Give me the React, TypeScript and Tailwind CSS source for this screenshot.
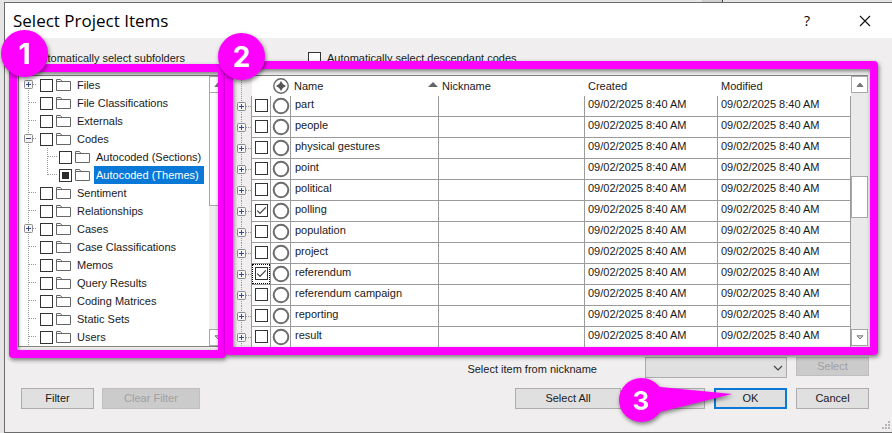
import React from "react";

type TreeNode = {
  label: string;
  expander?: "plus" | "minus";
  child?: boolean;
  last?: boolean;
  partial?: boolean;
};

const TREE: TreeNode[] = [
  { label: "Files", expander: "plus" },
  { label: "File Classifications" },
  { label: "Externals" },
  { label: "Codes", expander: "minus" },
  { label: "Autocoded (Sections)", child: true },
  { label: "Autocoded (Themes)", child: true, last: true, partial: true },
  { label: "Sentiment" },
  { label: "Relationships" },
  { label: "Cases", expander: "plus" },
  { label: "Case Classifications" },
  { label: "Memos" },
  { label: "Query Results" },
  { label: "Coding Matrices" },
  { label: "Static Sets" },
  { label: "Users" },
];

const CODES: { name: string; checked?: boolean; focused?: boolean }[] = [
  { name: "part" },
  { name: "people" },
  { name: "physical gestures" },
  { name: "point" },
  { name: "political" },
  { name: "polling", checked: true },
  { name: "population" },
  { name: "project" },
  { name: "referendum", checked: true, focused: true },
  { name: "referendum campaign" },
  { name: "reporting" },
  { name: "result" },
];

const STAMP = "09/02/2025 8:40 AM";

function Tick({ label, checked, partial }: { label?: string; checked?: boolean; partial?: boolean }) {
  return (
    <span className="grid size-[13px] shrink-0">
      <input
        type="checkbox"
        aria-label={label}
        defaultChecked={checked}
        className="peer col-start-1 row-start-1 size-[13px] appearance-none border border-[#333] bg-white"
      />
      {partial && <span className="pointer-events-none col-start-1 row-start-1 m-[3px] bg-[#2b2b2b]" />}
      <svg
        viewBox="0 0 13 13"
        className="pointer-events-none invisible col-start-1 row-start-1 size-[13px] peer-checked:visible"
      >
        <path d="M2.3 6.6 5 9.4 10.8 3.4" fill="none" stroke="#444" strokeWidth="1.3" />
      </svg>
    </span>
  );
}

function ExpanderBox({ x, y, kind }: { x: number; y: number; kind: "plus" | "minus" }) {
  return (
    <g>
      <rect x={x - 4} y={y - 4} width="8" height="8" rx="1" fill="#f4f4f4" stroke="#8c8c8c" />
      <path d={`M${x - 2.5} ${y}h5`} stroke="#3c4a8c" />
      {kind === "plus" && <path d={`M${x} ${y - 2.5}v5`} stroke="#3c4a8c" />}
    </g>
  );
}

function Gutter({ node, first }: { node: TreeNode; first: boolean }) {
  const drawing = (
    <svg viewBox="0 0 21 18" className="h-[18px] w-[21px]" fill="none">
      <path d={`M9.5 ${first ? 8 : 0}V18`} stroke="#9a9a9a" strokeDasharray="1 1" />
      {!node.child && <path d="M10 8.5H18" stroke="#9a9a9a" strokeDasharray="1 1" />}
      {node.expander && <ExpanderBox x={9.5} y={8.5} kind={node.expander} />}
    </svg>
  );
  return node.expander ? (
    <button type="button" aria-label={`Toggle ${node.label}`} className="shrink-0">
      {drawing}
    </button>
  ) : (
    <span className="shrink-0">{drawing}</span>
  );
}

function Folder() {
  return (
    <svg viewBox="0 0 16 13" className="h-[13px] w-[16px] shrink-0" fill="none" stroke="#666">
      <path d="M.5 11.5V.5H4.5L6 2.5H14.5V11.5ZM.5 2.5H6" />
    </svg>
  );
}

function TreeRow({ node, first }: { node: TreeNode; first: boolean }) {
  return (
    <li className="flex h-[18px] items-center">
      <Gutter node={node} first={first} />
      {node.child && (
        <svg viewBox="0 0 19 18" className="h-[18px] w-[19px] shrink-0" fill="none">
          <path d={`M7.5 0V${node.last ? 9 : 18}M8 8.5H17`} stroke="#9a9a9a" strokeDasharray="1 1" />
        </svg>
      )}
      <label className="flex h-full items-center">
        <Tick partial={node.partial} />
        <span className="ml-[3px]">
          <Folder />
        </span>
        <span
          className={`ml-[3px] h-full px-[2px] whitespace-nowrap leading-[18px] ${
            node.partial ? "bg-[#0a78d7] pr-[5px] text-white" : ""
          }`}
        >
          {node.label}
        </span>
      </label>
    </li>
  );
}

function ScrollButton({ dir }: { dir: "up" | "down" }) {
  return (
    <button
      type="button"
      aria-label={`Scroll ${dir}`}
      className="grid h-[17px] w-[17px] shrink-0 place-items-center border border-[#a8a8a8] bg-white"
    >
      <svg viewBox="0 0 8 5" className="h-[5px] w-[8px]">
        <path
          d={dir === "up" ? "M1 4.5 4 1 7 4.5Z" : "M1 .8H7L4 4Z"}
          fill={dir === "up" ? "#777" : "#ddd"}
          stroke="#777"
        />
      </svg>
    </button>
  );
}

function Frame({ className }: { className: string }) {
  return (
    <div
      aria-hidden="true"
      className={`pointer-events-none absolute rounded-[4px] border-8 border-[#ff00ff] drop-shadow-[1px_2px_2px_rgba(0,0,0,0.5)] ${className}`}
    />
  );
}

function Badge({ n, className }: { n: number; className: string }) {
  return (
    <div
      className={`pointer-events-none absolute z-20 grid size-[47px] place-items-center rounded-full bg-[#ff00ff] font-['Inter',sans-serif] text-[28px] font-bold text-white shadow-[1px_2px_4px_rgba(0,0,0,0.5)] ${className}`}
    >
      {n}
    </div>
  );
}

function Action({ children, className }: { children?: React.ReactNode; className: string }) {
  return (
    <button type="button" className={`h-[21px] shrink-0 ${className}`}>
      {children}
    </button>
  );
}

const PLAIN = "border border-[#adadad] bg-[#e1e0e1]";
const DIMMED = "border border-[#bfbfbf] bg-[#cccbcc] text-[#a0a0a0]";

export default function App() {
  return (
    <div className="overflow-hidden bg-[#e6e5e6] pl-[4px] font-['Liberation_Sans',Arial,sans-serif] text-[11px] text-[#1a1a1a]">
      <div className="flex h-[2px] justify-end pr-[169px]">
        <div className="w-[21px] border-r border-[#444] bg-[#cfcfcf]" />
      </div>
      <div className="border-y border-l border-[#6b6b6b] bg-[#f0eeef]">
        <header className="flex h-[35px] items-center bg-white pr-[18px] pl-[8px]">
          <h1 className="flex-1 font-['Open_Sans',sans-serif] text-[17px] text-black">Select Project Items</h1>
          <button type="button" aria-label="Help" className="mr-[46px] font-['Open_Sans',sans-serif] text-[14px] text-black">
            ?
          </button>
          <button type="button" aria-label="Close" className="grid size-[18px] place-items-center">
            <svg viewBox="0 0 12 12" className="size-[12px]">
              <path d="M1 1 11 11M11 1 1 11" stroke="#111" strokeWidth="1.1" />
            </svg>
          </button>
        </header>

        <main className="flex pr-[24px] pl-[13px]">
          <section className="mr-[8px] w-[207px] shrink-0">
            <div className="relative h-[37px] pt-[14px]">
              <label className="flex h-[13px] items-center gap-[2px] pl-px whitespace-nowrap">
                <Tick />
                <span>Automatically select subfolders</span>
              </label>
              <Badge n={1} className="top-[-8px] left-[-17px]" />
            </div>
            <div className="relative">
              <div className="flex border border-[#828282] bg-white">
                <ul className="min-w-0 flex-1">
                  {TREE.map((node, i) => (
                    <TreeRow key={node.label} node={node} first={i === 0} />
                  ))}
                </ul>
                <div className="flex w-[15px] shrink-0 flex-col bg-[#efeeef]">
                  <ScrollButton dir="up" />
                  <div className="h-[113px] w-[17px] border border-t-0 border-[#a8a8a8] bg-white" />
                  <div className="flex-1" />
                  <ScrollButton dir="down" />
                </div>
              </div>
              <Frame className="top-[-11px] right-[-1px] bottom-[-11px] left-[-9px]" />
            </div>
          </section>

          <section className="min-w-0 flex-1">
            <div className="relative h-[37px] pt-[14px] pl-[75px]">
              <label className="flex h-[13px] items-center gap-[6px] whitespace-nowrap">
                <Tick />
                <span>Automatically select descendant codes</span>
              </label>
              <Badge n={2} className="top-[-5px] left-[-15px]" />
            </div>
            <div className="relative">
              <div className="flex h-[273px] overflow-hidden border-t border-[#828282]">
                <table className="w-full min-w-0 flex-1 table-fixed border-separate border-spacing-0">
                  <colgroup>
                    <col className="w-[19px]" />
                    <col className="w-[19px]" />
                    <col className="w-[20px]" />
                    <col />
                    <col className="w-[146px]" />
                    <col className="w-[133px]" />
                    <col className="w-[133px]" />
                  </colgroup>
                  <thead>
                    <tr className="h-[20px] bg-white text-left">
                      <td className="bg-[#f0eeef] p-0">
                        <svg viewBox="0 0 19 20" className="block h-[20px] w-[19px]">
                          <path d="M8.5 0V20" stroke="#9a9a9a" strokeDasharray="1 1" />
                        </svg>
                      </td>
                      <td className="p-0" />
                      <td className="p-0">
                        <svg viewBox="0 0 16 16" className="mx-auto block size-[16px]">
                          <circle cx="8" cy="8" r="7.2" fill="none" stroke="#666" strokeWidth="1.4" />
                          <path d="M8 3 9.9 6.1 13 8 9.9 9.9 8 13 6.1 9.9 3 8 6.1 6.1Z" fill="#555" />
                        </svg>
                      </td>
                      <th className="p-0 pl-[3px] font-normal">
                        <span className="flex items-center justify-between pr-px">
                          Name
                          <svg viewBox="0 0 10 9" className="h-[9px] w-[10px]">
                            <path d="M0 5 5 0 10 5Z" fill="#666" />
                          </svg>
                        </span>
                      </th>
                      <th className="p-0 pl-[3px] font-normal">Nickname</th>
                      <th className="p-0 pl-[3px] font-normal">Created</th>
                      <th className="p-0 pl-[3px] font-normal">Modified</th>
                    </tr>
                  </thead>
                  <tbody>
                    {CODES.map((code) => (
                      <tr key={code.name} className="h-[21px] bg-white *:border-[#9b9b9b]">
                        <td className="border-r bg-[#f0eeef] p-0">
                          <button type="button" aria-label={`Expand ${code.name}`} className="block">
                            <svg viewBox="0 0 18 21" className="h-[21px] w-[18px]" fill="none">
                              <path d="M8.5 0V21M9 10.5H18" stroke="#9a9a9a" strokeDasharray="1 1" />
                              <ExpanderBox x={8.5} y={10.5} kind="plus" />
                            </svg>
                          </button>
                        </td>
                        <td className="border-r border-b p-0">
                          <div
                            className={`flex h-[20px] items-start justify-center pt-[3px] ${
                              code.focused ? "outline-1 -outline-offset-1 outline-dotted outline-black" : ""
                            }`}
                          >
                            <Tick label={code.name} checked={code.checked} />
                          </div>
                        </td>
                        <td className="border-r border-b p-0">
                          <svg viewBox="0 0 18 18" className="mx-auto block size-[18px]">
                            <circle cx="9" cy="9" r="7.3" fill="none" stroke="#6c6c6c" strokeWidth="2" />
                          </svg>
                        </td>
                        <td className="border-r border-b p-0 pb-[4px] pl-[4px] leading-[16px]">{code.name}</td>
                        <td className="border-r border-b p-0" />
                        <td className="border-r border-b p-0 pb-[4px] pl-[3px] leading-[16px]">{STAMP}</td>
                        <td className="border-r border-b p-0 pb-[4px] pl-[3px] leading-[16px]">{STAMP}</td>
                      </tr>
                    ))}
                  </tbody>
                </table>
                <div className="flex w-[17px] shrink-0 flex-col bg-[#ebeaeb]">
                  <ScrollButton dir="up" />
                  <div className="h-[83px]" />
                  <div className="h-[42px] border border-[#a8a8a8] bg-white" />
                  <div className="flex-1" />
                  <ScrollButton dir="down" />
                  <div className="h-[2px]" />
                </div>
              </div>
              <Frame className="top-[-14px] right-[-10px] bottom-[-7px] left-[-8px]" />
            </div>
          </section>
        </main>

        <footer className="pt-[9px] pr-[23px] pl-[16px]">
          <div className="flex items-start justify-end">
            <label htmlFor="nickname" className="mr-[48px] leading-[24px]">
              Select item from nickname
            </label>
            <span className="mr-[9px] grid w-[142px]">
              <select
                id="nickname"
                className="col-start-1 row-start-1 h-[21px] appearance-none border border-[#adadad] bg-[#e1e0e1]"
              />
              <svg
                viewBox="0 0 10 6"
                className="pointer-events-none col-start-1 row-start-1 mr-[4px] h-[6px] w-[10px] self-center justify-self-end"
              >
                <path d="M1 1 5 5 9 1" fill="none" stroke="#444" strokeWidth="1.2" />
              </svg>
            </span>
            <button type="button" className={`h-[19px] w-[73px] shrink-0 ${DIMMED}`}>
              Select
            </button>
          </div>
          <div className="flex pt-[7px]">
            <Action className={`mr-[8px] w-[73px] ${PLAIN}`}>Filter</Action>
            <Action className={`w-[98px] ${DIMMED}`}>Clear Filter</Action>
            <div className="relative ml-auto flex">
              <Action className={`w-[106px] ${PLAIN}`}>Select All</Action>
              <button type="button" aria-label="More selection options" className={`mr-[9px] ml-[8px] h-[21px] w-[76px] ${PLAIN}`} />
              <Action className="mr-[9px] w-[73px] border-2 border-[#0a78d7] bg-[#e1e0e1]">OK</Action>
              <Action className={`w-[73px] ${PLAIN}`}>Cancel</Action>
              <div className="pointer-events-none absolute top-[-10px] left-[104px] h-[44px] w-[114px] drop-shadow-[1px_2px_2px_rgba(0,0,0,0.5)]">
                <svg viewBox="0 0 114 44" className="absolute inset-0 h-[44px] w-[114px]">
                  <path
                    d="M22 0C30 0 35 3 41 9L113 16 41 34C37 40 30 44 22 44A22 22 0 0 1 22 0Z"
                    fill="#ff00ff"
                  />
                </svg>
                <div className="relative grid size-[44px] place-items-center font-['Inter',sans-serif] text-[26px] font-bold text-white">
                  3
                </div>
              </div>
            </div>
          </div>
          <div className="-mr-[23px] flex h-[23px] items-end justify-end pr-px pb-[2px]">
            <svg viewBox="0 0 9 9" className="size-[9px]" fill="#b5b5b5">
              <path d="M6 0h2v2h-2zM3 3h2v2h-2zM6 3h2v2h-2zM0 6h2v2h-2zM3 6h2v2h-2zM6 6h2v2h-2z" />
            </svg>
          </div>
        </footer>
      </div>
    </div>
  );
}
